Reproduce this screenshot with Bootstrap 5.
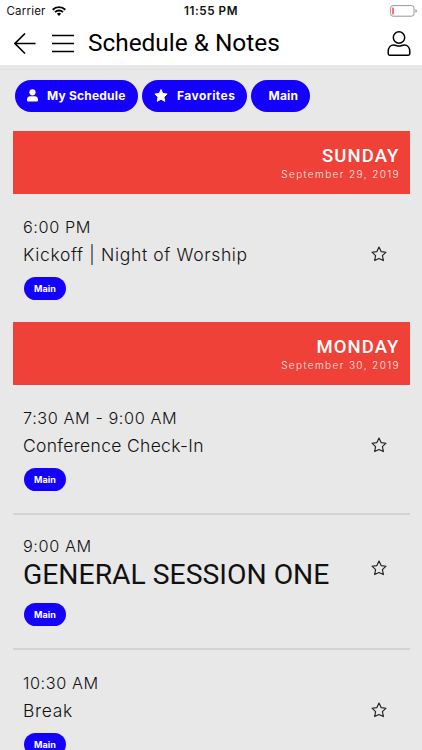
<!DOCTYPE html>
<html lang="en">
<head>
<meta charset="utf-8">
<meta name="viewport" content="width=device-width, initial-scale=1">
<title>Schedule &amp; Notes</title>
<link href="https://cdn.jsdelivr.net/npm/bootstrap@5.3.0/dist/css/bootstrap.min.css" rel="stylesheet">
<style>
body{background:#e8e8e8;color:#111;font-family:Inter,"Liberation Sans",sans-serif;height:750px}
svg{display:block;flex:none}
.status{height:22px;font-size:11.5px;line-height:22px;color:#111}
.status .side{width:150px}
.carrier{padding-left:6.5px;margin-right:6px;letter-spacing:.2px}
.clock{font-size:11.7px;letter-spacing:.55px}
.topbar{height:43px;color:#000}
.back{margin-left:14px;margin-right:16px}
.menu{margin-right:14px}
.account{margin-right:11.5px}
.page-title{font:400 24.4px/34px Roboto,sans-serif;padding-bottom:2px}
.edge{height:5px;border-bottom:1px solid #e2e2e2}
.filters{padding:9.5px 14.5px 0;gap:4px;height:61px}
.pill{background:#1400ff;color:#fff;height:32px;font-size:12px;font-weight:700;letter-spacing:.45px}
.pill:hover{color:#fff}
.p1{width:123px;padding-left:12px;letter-spacing:.2px}
.p2{width:105.5px;padding-left:12px}
.p3{width:58.5px;padding-left:17.5px;letter-spacing:.2px}
.label-gap{margin-right:9.5px}
.day{height:63px;margin:0 12.5px;background:#ef4137;color:#fff;padding:15px 10px 0 0}
.day h2{font:500 18.5px/21px Roboto,sans-serif;letter-spacing:1.1px;margin:0}
.day p{font-size:10px;line-height:14px;letter-spacing:1.4px;margin:0 -.5px 0 0;font-weight:300;color:#ffe9e6}
.event{height:128px;margin:0 12.5px;padding:22px 23px 0 10.5px}
.event.ruled{height:130px;border-bottom:2px solid #d3d3d3}
.event.general{height:135px;padding-top:20px}
.time{font-size:16.3px;line-height:22px;font-weight:300;letter-spacing:.57px}
.name{font-size:17.5px;line-height:34px;font-weight:300;letter-spacing:.65px;margin-bottom:5px}
.name.tight{letter-spacing:.32px}
.general .name{font:400 28.3px/36px Roboto,sans-serif;letter-spacing:0;margin-bottom:10px}
.tag{background:#1400ff;color:#fff;width:42.5px;height:22.5px;margin-left:.8px;font-size:9px;font-weight:700;letter-spacing:.1px}
.fav{margin-top:30px}
.general .fav{margin-top:25px}
</style>
<script src="https://cdn.jsdelivr.net/npm/bootstrap@5.3.0/dist/js/bootstrap.bundle.min.js"></script>
</head>
<body class="overflow-hidden">
<svg width="0" height="0" class="position-absolute"><defs><symbol id="star" viewBox="0 0 16 16"><path d="M8 1.1 L10.1 5.6 L15 6.2 L11.4 9.6 L12.4 14.6 L8 12.5 L3.6 14.6 L4.6 9.6 L1 6.2 L5.9 5.6Z" fill="none" stroke="#222" stroke-width="1.15" stroke-linejoin="round"/></symbol></defs></svg>
<header class="bg-white">
  <div class="status d-flex justify-content-between align-items-center">
    <div class="side d-flex align-items-center"><span class="carrier">Carrier</span>
      <svg width="14" height="10" viewBox="0 0 14 10"><g fill="none" stroke="#000" stroke-width="1.9"><path d="M.7 3.7a9 9 0 0 1 12.6 0"/><path d="M3 6.1a5.7 5.7 0 0 1 8 0"/></g><path d="M7 10 4.9 7.8a3 3 0 0 1 4.2 0Z"/></svg></div>
    <span class="clock fw-semibold">11:55 PM</span>
    <div class="side d-flex justify-content-end pe-1">
      <svg width="28" height="12" viewBox="0 0 28 12"><rect x=".6" y=".6" width="23.4" height="10.6" rx="2.4" fill="none" stroke="#999"/><path d="M25.4 4v3.8q1.5-.5 1.5-1.9T25.4 4Z" fill="#999"/><rect x="2.3" y="2.4" width="1.4" height="7" rx=".4" fill="#ff3b30"/></svg></div>
  </div>
  <div class="topbar d-flex align-items-center">
    <svg class="back" width="22" height="22" viewBox="0 0 22 22"><path d="M11 .5 1 10.500l10 10M1 10.500h20.500" fill="none" stroke="#000" stroke-width="1.6"/></svg>
    <svg class="menu" width="22" height="20" viewBox="0 0 22 20"><path d="M0 1.500h22M0 9.500h22M0 17.500h22" stroke="#000" stroke-width="1.6"/></svg>
    <h1 class="page-title mb-0">Schedule &amp; Notes</h1>
    <svg class="account ms-auto" width="24" height="26" viewBox="0 0 24 26"><g fill="none" stroke="#000" stroke-width="1.5"><circle cx="12" cy="6.5" r="5.7"/><path d="M6.8 14.1C3.2 14.1 1.2 17.1 1.2 20.500v2.100q0 1.600 1.600 1.600h18.400q1.600 0 1.600-1.600V20.500c0-3.400-2-6.400-5.600-6.400-1.700 0-2.900 1-5.200 1s-3.500-1-5.200-1Z"/></g></svg>
  </div>
</header>
<div class="edge"></div>
<main>
  <nav class="filters d-flex">
    <a href="#" class="pill p1 rounded-pill d-flex align-items-center text-decoration-none"><svg class="label-gap" width="11" height="13" viewBox="0 0 11 13" fill="#fff"><circle cx="5.5" cy="3.3" r="3.1"/><path d="M3.2 7.2h4.6Q11 7.5 11 10.5v.8q0 1.2-1.2 1.2H1.2Q0 12.5 0 11.3v-.8Q0 7.5 3.2 7.2Z"/></svg><span>My Schedule</span></a>
    <a href="#" class="pill p2 rounded-pill d-flex align-items-center text-decoration-none"><svg class="label-gap" width="14" height="13" viewBox="0 0 14 13"><path d="M7 .6 8.8 4.5 13.1 5 9.9 8 10.8 12.3 7 10.2 3.2 12.3 4.1 8 .9 5 5.2 4.5Z" fill="#fff" stroke="#fff" stroke-linejoin="round"/></svg><span>Favorites</span></a>
    <a href="#" class="pill p3 rounded-pill d-flex align-items-center text-decoration-none">Main</a>
  </nav>
  <section>
    <div class="day text-end"><h2>SUNDAY</h2><p>September 29, 2019</p></div>
    <article class="event d-flex justify-content-between"><div><div class="time">6:00 PM</div><div class="name">Kickoff | Night of Worship</div><div class="tag rounded-pill d-flex align-items-center justify-content-center">Main</div></div><svg class="fav" width="16" height="16"><use href="#star"/></svg></article>
  </section>
  <section>
    <div class="day text-end"><h2>MONDAY</h2><p>September 30, 2019</p></div>
    <article class="event ruled d-flex justify-content-between"><div><div class="time">7:30 AM - 9:00 AM</div><div class="name tight">Conference Check-In</div><div class="tag rounded-pill d-flex align-items-center justify-content-center">Main</div></div><svg class="fav" width="16" height="16"><use href="#star"/></svg></article>
    <article class="event ruled general d-flex justify-content-between"><div><div class="time">9:00 AM</div><div class="name">GENERAL SESSION ONE</div><div class="tag rounded-pill d-flex align-items-center justify-content-center">Main</div></div><svg class="fav" width="16" height="16"><use href="#star"/></svg></article>
    <article class="event d-flex justify-content-between"><div><div class="time">10:30 AM</div><div class="name">Break</div><div class="tag rounded-pill d-flex align-items-center justify-content-center">Main</div></div><svg class="fav" width="16" height="16"><use href="#star"/></svg></article>
  </section>
</main>
</body>
</html>
